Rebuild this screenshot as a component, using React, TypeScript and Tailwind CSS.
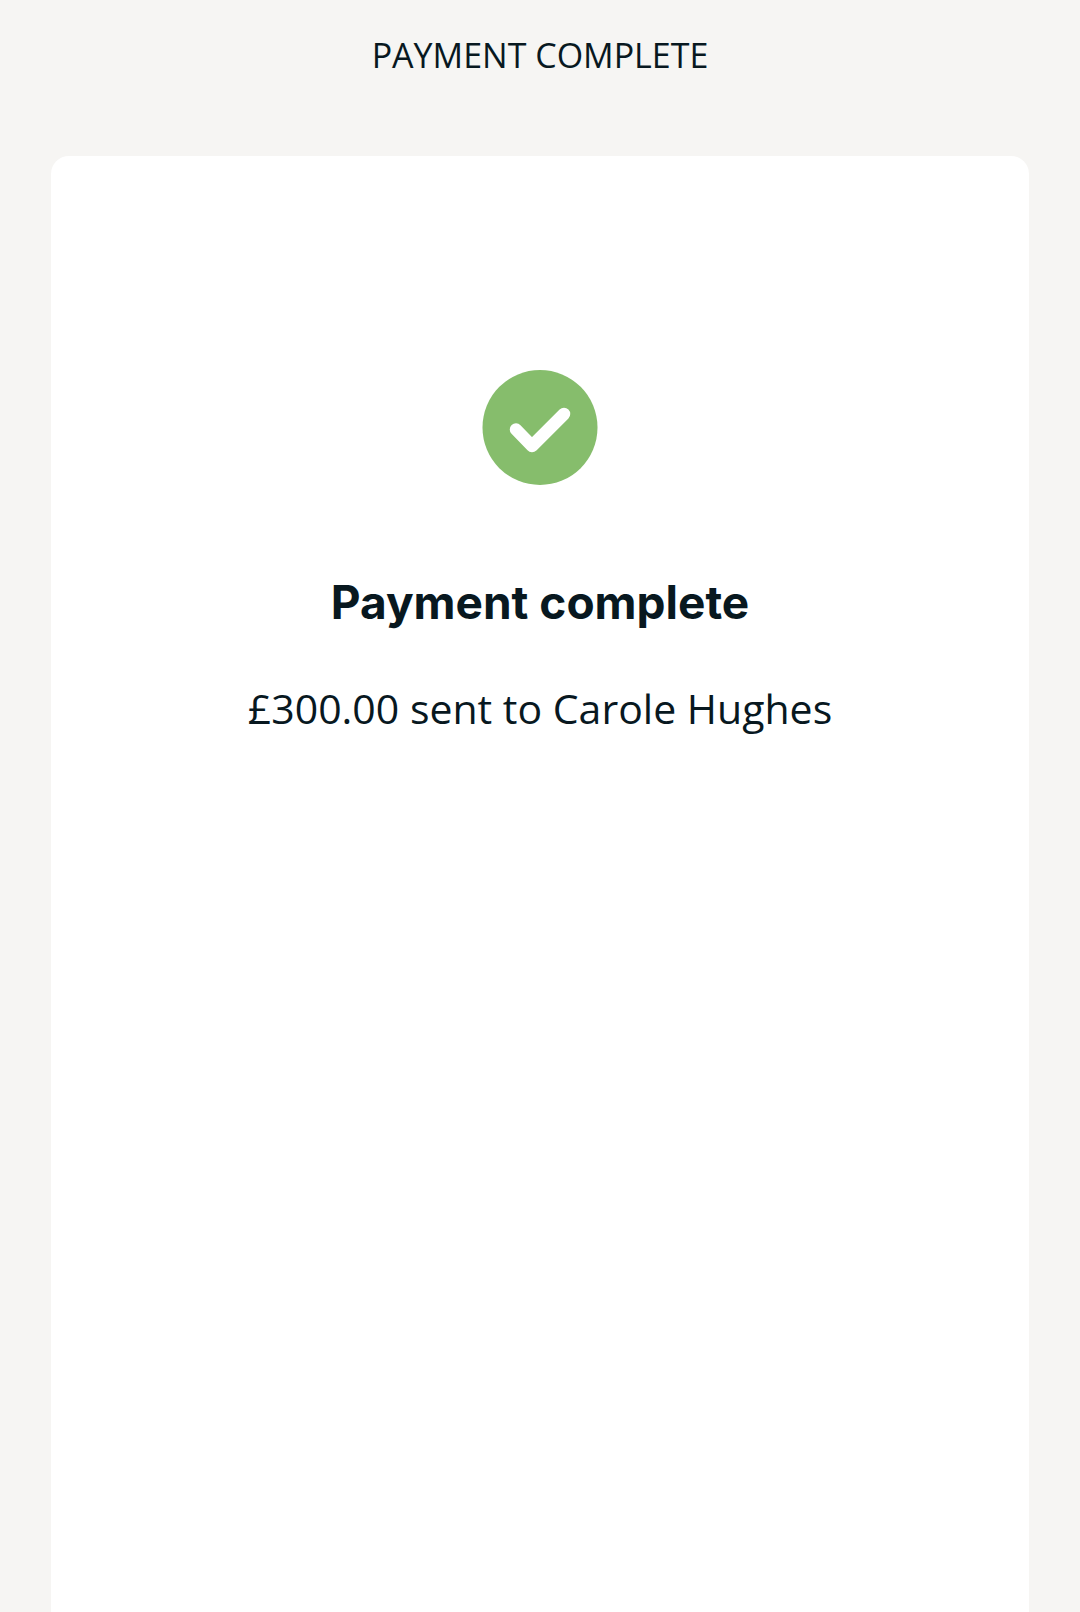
function SuccessIcon() {
  return (
    <svg viewBox="0 0 116 116" className="size-[116px]" role="img" aria-label="Success">
      <circle cx="58" cy="58.5" r="57.5" fill="#86bd6c" />
      <path
        d="M34 60.5 50 77 82 45"
        fill="none"
        stroke="#ffffff"
        strokeWidth="12.5"
        strokeLinecap="round"
        strokeLinejoin="round"
      />
    </svg>
  );
}

export default function App() {
  return (
    <div className="flex min-h-screen flex-col bg-[#f6f5f3] px-[51px] font-['Open_Sans',sans-serif] text-[#08181f]">
      <header className="flex h-[156px] justify-center pt-[31px]">
        <h1 className="text-[34px] leading-[48px]">PAYMENT COMPLETE</h1>
      </header>
      <main className="flex grow flex-col items-center rounded-t-[18px] bg-white pt-[213px] text-center">
        <SuccessIcon />
        <h2 className="mt-[85px] font-['Inter',sans-serif] text-[46px] leading-[64px] font-bold">Payment complete</h2>
        <p className="mt-[46px] text-[41px] leading-[56px]">£300.00 sent to Carole Hughes</p>
      </main>
    </div>
  );
}
